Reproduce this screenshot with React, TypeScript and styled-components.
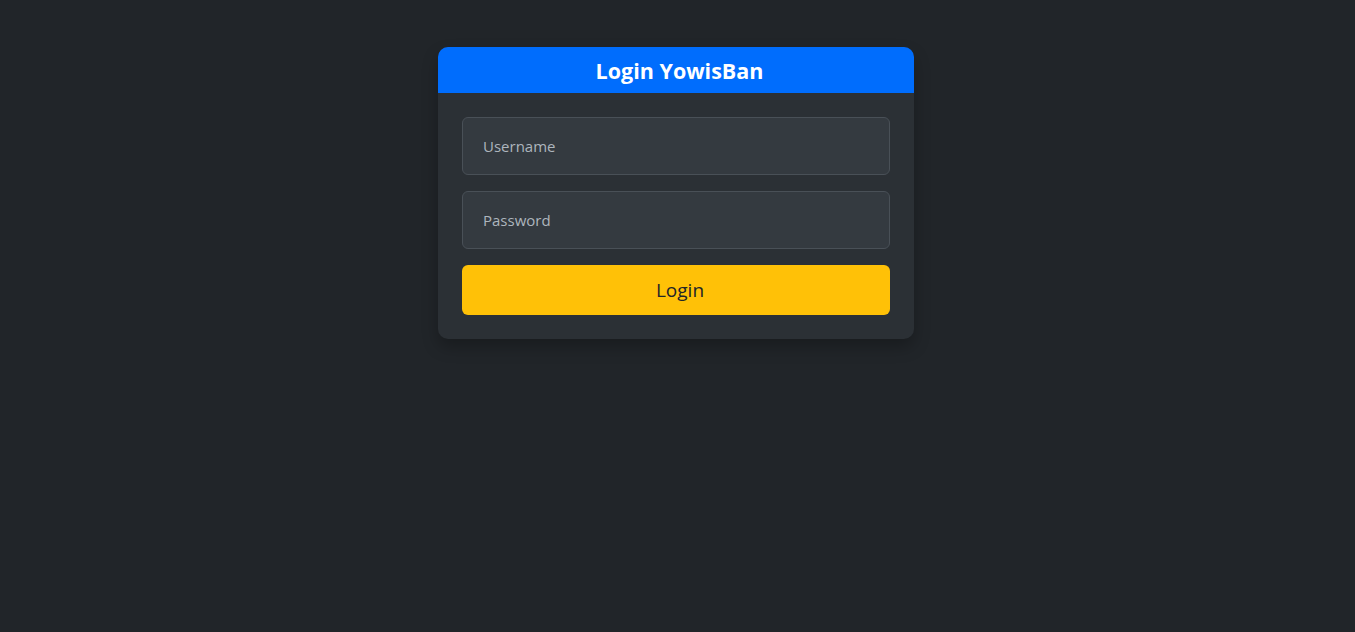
import React from "react";
import styled, { createGlobalStyle } from "styled-components";

const Global = createGlobalStyle`
  html, body { margin: 0; padding: 0; background: #212529; }
  body { font-family: "Open Sans", "Noto Sans", sans-serif; color: #dee2e6; }
  * { box-sizing: border-box; }
`;

const Page = styled.div`
  min-height: 632px;
  display: flex;
  justify-content: center;
  align-items: flex-start;
  padding: 47px 3px 0 0;
`;

const Card = styled.div`
  width: 476px;
  background: #2b3035;
  border-radius: 10px;
  box-shadow: 0 8px 16px rgba(0, 0, 0, 0.25);
  overflow: hidden;
`;

const Header = styled.div`
  height: 46px;
  background: #006dfd;
  display: flex;
  align-items: center;
  justify-content: center;
  padding-left: 7px;
`;

const Title = styled.h1`
  margin: 0;
  font-size: 21.5px;
  font-weight: 700;
  color: #ffffff;
`;

const Body = styled.form`
  padding: 24px;
  display: flex;
  flex-direction: column;
  gap: 16px;
`;

const Input = styled.input`
  height: 58px;
  width: 100%;
  background: #343a40;
  border: 1px solid #495057;
  border-radius: 6px;
  padding: 0 20px;
  font-family: inherit;
  font-size: 15px;
  color: #dee2e6;
  outline: none;
  &::placeholder { color: #adb5bd; }
`;

const Button = styled.button`
  height: 50px;
  width: 100%;
  background: #ffc107;
  border: none;
  border-radius: 6px;
  padding: 0 0 0 8px;
  font-family: inherit;
  font-size: 19px;
  color: #212529;
  cursor: pointer;
`;

export default function App() {
  return (
    <>
      <Global />
      <Page>
        <Card>
          <Header>
            <Title>Login YowisBan</Title>
          </Header>
          <Body onSubmit={(e) => e.preventDefault()}>
            <Input type="text" placeholder="Username" />
            <Input type="password" placeholder="Password" />
            <Button type="submit">Login</Button>
          </Body>
        </Card>
      </Page>
    </>
  );
}
